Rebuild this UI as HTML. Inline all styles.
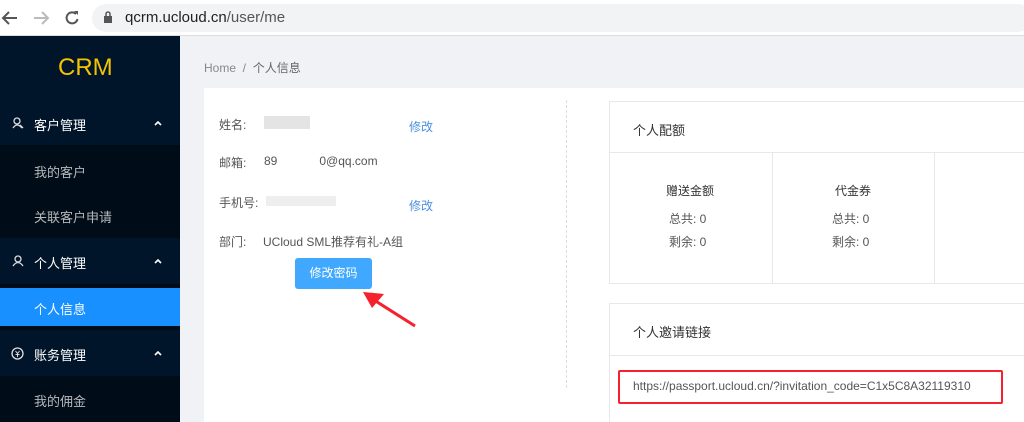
<!DOCTYPE html>
<html><head><meta charset="utf-8"><style>
*{margin:0;padding:0;box-sizing:border-box}
html,body{width:1024px;height:422px;overflow:hidden}
body{background:#f0f2f5;font-family:"Liberation Sans","Noto Sans CJK SC",sans-serif;position:relative}
.a{position:absolute}
.bar{left:0;top:0;width:1024px;height:36px;background:#fff;border-bottom:1px solid #ddd}
.pill{left:92px;top:4px;width:940px;height:28px;border-radius:14px;background:#f1f3f4}
.side{left:0;top:36px;width:180px;height:386px;background:#001529}
.sub{background:#000c17;left:0;width:180px}
.mi{color:#fff;font-size:13px;left:34px}
.si{color:rgba(255,255,255,.7);font-size:13px;left:34px}
.lab{color:#555;font-size:12px}
.card{background:#fff}
.t{color:#555;font-size:12px}
</style></head><body>
<div class="a bar"></div>
<div class="a pill"></div>
<svg class="a" style="left:0;top:8px" width="90" height="20" viewBox="0 0 90 20"><path d="M17 10H3M9 4 3 10l6 6" stroke="#555" stroke-width="2" fill="none"/><path d="M34 10h14M42 4l6 6-6 6" stroke="#bbb" stroke-width="2" fill="none"/><path d="M76 6a5.5 5.5 0 1 0 1.5 5" stroke="#555" stroke-width="2" fill="none"/><path d="M74 3h4v4z" fill="#555"/></svg>
<svg class="a" style="left:103px;top:11px" width="10" height="13"><rect x="1" y="5" width="8" height="7" fill="#555"/><path d="M3 5V3a2 2 0 0 1 4 0v2" stroke="#555" stroke-width="1.5" fill="none"/></svg>
<div class="a" style="left:125px;top:9px;font-size:15px;color:#222">qcrm.ucloud.cn<span style="color:#555">/user/me</span></div>
<div class="a side"></div>
<div class="a" style="left:58px;top:54px;color:#f5c400;font-size:24px">CRM</div>
<div class="a sub" style="top:145px;height:93px"></div>
<div class="a sub" style="top:284px;height:46px"></div>
<div class="a sub" style="top:376px;height:46px"></div>
<div class="a" style="left:0;top:288px;width:180px;height:38px;background:#1890ff"></div>
<svg class="a" style="left:12px;top:117px" width="12" height="12"><circle cx="5" cy="4" r="3" stroke="#ddd" fill="none" stroke-width="1.3"/><path d="M1 11q4-6 9 0M8 8l3 3" stroke="#ddd" fill="none" stroke-width="1.3"/></svg>
<div class="a mi" style="top:115px">客户管理</div>
<svg class="a" style="left:154px;top:120px" width="8" height="6"><path d="M1 5 4 2 7 5" stroke="#fff" stroke-width="1.6" fill="none"/></svg>
<div class="a si" style="top:162px">我的客户</div>
<div class="a si" style="top:207px">关联客户申请</div>
<svg class="a" style="left:12px;top:255px" width="12" height="12"><circle cx="6" cy="4" r="3" stroke="#ddd" fill="none" stroke-width="1.3"/><path d="M1 11q5-7 10 0" stroke="#ddd" fill="none" stroke-width="1.3"/></svg>
<div class="a mi" style="top:253px">个人管理</div>
<svg class="a" style="left:154px;top:258px" width="8" height="6"><path d="M1 5 4 2 7 5" stroke="#fff" stroke-width="1.6" fill="none"/></svg>
<div class="a mi" style="top:299px">个人信息</div>
<svg class="a" style="left:11px;top:347px" width="13" height="13"><circle cx="6.5" cy="6.5" r="5.5" stroke="#ddd" fill="none" stroke-width="1.3"/><path d="M4.5 4l2 2.5 2-2.5M6.5 6.5V10M4.5 7.5h4" stroke="#ddd" fill="none" stroke-width="1"/></svg>
<div class="a mi" style="top:345px">账务管理</div>
<svg class="a" style="left:154px;top:350px" width="8" height="6"><path d="M1 5 4 2 7 5" stroke="#fff" stroke-width="1.6" fill="none"/></svg>
<div class="a si" style="top:391px">我的佣金</div>
<div class="a" style="left:204px;top:59px;font-size:12px;color:#888">Home&nbsp;&nbsp;/&nbsp;&nbsp;<span style="color:#666">个人信息</span></div>
<div class="a card" style="left:204px;top:88px;width:820px;height:334px"></div>
<div class="a" style="left:566px;top:100px;height:288px;border-left:1px dashed #ddd"></div>
<div class="a lab" style="left:219px;top:116px">姓名:</div>
<div class="a" style="left:264px;top:116px;width:46px;height:13px;background:#e4e4e4"></div>
<div class="a" style="left:409px;top:118px;color:#4a90e2;font-size:12px">修改</div>
<div class="a lab" style="left:219px;top:154px">邮箱:</div>
<div class="a lab" style="left:264px;top:154px">89<span style="color:#fff">xxxxxxx</span>0@qq.com</div>
<div class="a lab" style="left:219px;top:194px">手机号:</div>
<div class="a" style="left:266px;top:196px;width:70px;height:10px;background:#eee"></div>
<div class="a" style="left:409px;top:197px;color:#4a90e2;font-size:12px">修改</div>
<div class="a lab" style="left:219px;top:233px">部门:&nbsp;&nbsp;&nbsp;&nbsp;&nbsp;UCloud SML推荐有礼-A组</div>
<div class="a" style="left:295px;top:258px;width:77px;height:31px;background:#40a9ff;border-radius:3px;color:#fff;font-size:12px;text-align:center;line-height:31px">修改密码</div>
<svg class="a" style="left:360px;top:288px" width="60" height="42"><path d="M55 38 14 12" stroke="#f5222d" stroke-width="3"/><path d="M3 4 24 6 12 20z" fill="#f5222d"/></svg>
<div class="a card" style="left:609px;top:101px;width:420px;height:183px;border:1px solid #e8e8e8"></div>
<div class="a" style="left:609px;top:152px;width:420px;border-top:1px solid #e8e8e8"></div>
<div class="a" style="left:772px;top:152px;height:131px;border-left:1px solid #e8e8e8"></div>
<div class="a" style="left:934px;top:152px;height:131px;border-left:1px solid #e8e8e8"></div>
<div class="a t" style="left:633px;top:120px;font-size:13px;color:#333">个人配额</div>
<div class="a t" style="left:666px;top:182px;color:#333">赠送金额</div>
<div class="a t" style="left:669px;top:210px">总共: 0</div>
<div class="a t" style="left:669px;top:233px">剩余: 0</div>
<div class="a t" style="left:835px;top:182px;color:#333">代金券</div>
<div class="a t" style="left:832px;top:210px">总共: 0</div>
<div class="a t" style="left:832px;top:233px">剩余: 0</div>
<div class="a card" style="left:609px;top:303px;width:420px;height:130px;border:1px solid #e8e8e8"></div>
<div class="a" style="left:609px;top:355px;width:420px;border-top:1px solid #e8e8e8"></div>
<div class="a t" style="left:633px;top:322px;font-size:13px;color:#333">个人邀请链接</div>
<div class="a" style="left:618px;top:370px;width:385px;height:34px;border:2px solid #f5222d;border-radius:2px"></div>
<div class="a t" style="left:633px;top:379px;font-size:12px">https://passport.ucloud.cn/?invitation_code=C1x5C8A32119310</div>
</body></html>
